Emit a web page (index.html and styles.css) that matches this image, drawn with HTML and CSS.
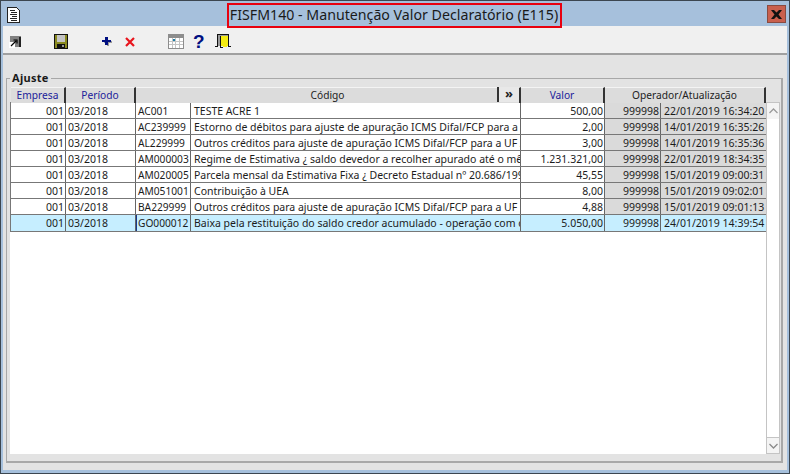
FILE: index.html
```html
<!DOCTYPE html>
<html lang="pt">
<head>
<meta charset="utf-8">
<title>FISFM140</title>
<link rel="stylesheet" href="styles.css">
</head>
<body>
<div class="window">
  <header class="titlebar">
    <svg class="app-icon" width="13" height="16" viewBox="0 0 13 16" shape-rendering="crispEdges">
      <path d="M.5.5h9l3 3v12H.5z" fill="#fff" stroke="#222"/>
      <path d="M3 3h5v1H3zM4 5h6v1H4zM3 7h7v1H3zM5 9h5v1H5zM3 11h7v1H3zM4 13h6v1H4z" fill="#222"/>
    </svg>
    <h1 class="title">FISFM140 - Manutenção Valor Declaratório (E115)</h1>
    <button class="close" aria-label="Fechar">
      <svg width="11" height="9" viewBox="0 0 11 9"><path d="M0 0h3l2.500 2.500L8 0h3L7.500 4.500 11 9H8L5.500 6.500 3 9H0l3.500-4.500z" fill="#111"/></svg>
    </button>
  </header>
  <nav class="toolbar">
    <svg class="tool t-jump" width="12" height="12" viewBox="0 0 12 12" shape-rendering="crispEdges">
      <path d="M1 0h11v11H1z" fill="#808080"/><path d="M10 1h2v10h-2z" fill="#222"/>
      <path d="M0 6h6v6H0z" fill="#fff"/><path d="M2 10l5-5M4.500 4h3.500v3.500" fill="none" stroke="#000" stroke-width="1.200" shape-rendering="auto"/>
    </svg>
    <svg class="tool t-save" width="14" height="15" viewBox="0 0 14 15" shape-rendering="crispEdges">
      <path d="M0 0h14v15H0z" fill="#111"/><path d="M1 1h12v13H1z" fill="#8a8a20"/><path d="M3 1h8v7H3z" fill="#c4c4c4"/><path d="M3 10h8v4H3z" fill="#111"/><path d="M8 11h2v2H8z" fill="#999"/>
    </svg>
    <svg class="tool t-add" width="10" height="9" viewBox="0 0 10 9" shape-rendering="crispEdges">
      <path d="M5 3h4v1h1v2H7v3H5V6H2V5h3z" fill="#9a9a9a"/><path d="M3 0h3v3h3v2H6v3H3V5H0V3h3z" fill="#000f80"/>
    </svg>
    <svg class="tool t-del" width="10" height="10" viewBox="0 0 10 10">
      <path d="M1 1l8 8M9 1l-8 8" stroke="#e8141c" stroke-width="2.200" fill="none"/>
    </svg>
    <svg class="tool t-cal" width="16" height="15" viewBox="0 0 16 15" shape-rendering="crispEdges">
      <path d="M0 0h16v15H0z" fill="#8d8d8d"/><path d="M1 4h14v10H1z" fill="#fff"/>
      <path d="M4 4h1v10H4zM7 4h1v10H7zM11 4h1v10h-1zM1 7h14v1H1zM1 10h14v1H1z" fill="#c4c4c4"/><path d="M5 5h2v2H5z" fill="#1b7fa8"/>
    </svg>
    <span class="tool t-help">?</span>
    <svg class="tool t-exit" width="16" height="15" viewBox="0 0 16 15" shape-rendering="crispEdges">
      <path d="M2 0h12v1H2zM2 1h1v12H2zM13 1h1v12h-1z" fill="#111"/>
      <path d="M0 12h3v1H0zM13 12h3v1h-3z" fill="#111"/>
      <path d="M3 1h10v1H3zM3 2h2v10H3z" fill="#9a9a9a"/>
      <path d="M5 2h1v12H5zM6 13h2v1H6z" fill="#111"/>
      <path d="M6 2h7v10h-1v1H8v-1H6z" fill="#f5ec12"/>
    </svg>
  </nav>
  <main class="content">
    <section class="group">
      <h2 class="legend">Ajuste</h2>
      <div class="grid-wrap">
        <div class="grid-main">
          <div class="row head">
            <div class="hcell blue">Empresa</div>
            <div class="hcell blue">Período</div>
            <div class="hcell span2">Código<span class="more">»</span></div>
            <div class="hcell blue">Valor</div>
            <div class="hcell span2b">Operador/Atualização</div>
          </div>
          <div class="rows">
            <div class="row"><div class="c r">001</div><div class="c">03/2018</div><div class="c">AC001</div><div class="c">TESTE ACRE 1</div><div class="c r">500,00</div><div class="c r g">999998</div><div class="c g">22/01/2019 16:34:20</div></div>
            <div class="row"><div class="c r">001</div><div class="c">03/2018</div><div class="c">AC239999</div><div class="c">Estorno de débitos para ajuste de apuração ICMS Difal/FCP para a UF de Acre</div><div class="c r">2,00</div><div class="c r g">999998</div><div class="c g">14/01/2019 16:35:26</div></div>
            <div class="row"><div class="c r">001</div><div class="c">03/2018</div><div class="c">AL229999</div><div class="c">Outros créditos para ajuste de apuração ICMS Difal/FCP para a UF Alagoas</div><div class="c r">3,00</div><div class="c r g">999998</div><div class="c g">14/01/2019 16:35:36</div></div>
            <div class="row"><div class="c r">001</div><div class="c">03/2018</div><div class="c">AM000003</div><div class="c">Regime de Estimativa ¿ saldo devedor a recolher apurado até o mês</div><div class="c r">1.231.321,00</div><div class="c r g">999998</div><div class="c g">22/01/2019 18:34:35</div></div>
            <div class="row"><div class="c r">001</div><div class="c">03/2018</div><div class="c">AM020005</div><div class="c">Parcela mensal da Estimativa Fixa ¿ Decreto Estadual nº 20.686/1999</div><div class="c r">45,55</div><div class="c r g">999998</div><div class="c g">15/01/2019 09:00:31</div></div>
            <div class="row"><div class="c r">001</div><div class="c">03/2018</div><div class="c">AM051001</div><div class="c">Contribuição à UEA</div><div class="c r">8,00</div><div class="c r g">999998</div><div class="c g">15/01/2019 09:02:01</div></div>
            <div class="row"><div class="c r">001</div><div class="c">03/2018</div><div class="c">BA229999</div><div class="c">Outros créditos para ajuste de apuração ICMS Difal/FCP para a UF Bahia</div><div class="c r">4,88</div><div class="c r g">999998</div><div class="c g">15/01/2019 09:01:13</div></div>
            <div class="row sel"><div class="c r">001</div><div class="c">03/2018</div><div class="c focus">GO000012</div><div class="c">Baixa pela restituição do saldo credor acumulado - operação com diferimento</div><div class="c r">5.050,00</div><div class="c r">999998</div><div class="c">24/01/2019 14:39:54</div></div>
          </div>
        </div>
        <div class="scrollbar">
          <div class="sbtn"><svg width="9" height="6" viewBox="0 0 9 6"><path d="M.5 5l4-4 4 4" fill="none" stroke="#9a9a9a" stroke-width="1.300"/></svg></div>
          <div class="sbtn"><svg width="9" height="6" viewBox="0 0 9 6"><path d="M.5 1l4 4 4-4" fill="none" stroke="#8a8a8a" stroke-width="1.300"/></svg></div>
        </div>
      </div>
    </section>
  </main>
</div>
</body>
</html>
```
FILE: styles.css
```css
* { box-sizing: border-box; }
html, body { margin: 0; padding: 0; }
body { width: 790px; height: 474px; overflow: hidden; font-family: "Noto Sans", sans-serif; }
.window { width: 790px; height: 474px; display: flex; flex-direction: column; background: #a6c0dc; border: 1px solid #3c4650; padding: 0 2px 3px 2px; }
.titlebar { height: 25px; margin: 0 -2px; display: flex; align-items: flex-start; position: relative; justify-content: center; flex: none; }
.app-icon { position: absolute; left: 6px; top: 6px; }
.title { margin: 2px 0 0 -2px; height: 25px; padding: 0; border: 2px solid #e8000f; font: 400 14.2px/20px "Noto Sans", sans-serif; color: #1a1a1a; white-space: nowrap; width: 335px; text-align: center; position: relative; z-index: 1; }
.close { position: absolute; right: 3px; top: 4px; width: 19px; height: 18px; padding: 0; background: #c9604e; border: 1px solid #8a4a40; display: flex; align-items: center; justify-content: center; }
.toolbar { height: 29px; flex: none; background: #f0f0f0; border-bottom: 2px solid #a0a0a0; display: flex; align-items: center; padding: 4px 0 0 6px; }
.tool { flex: none; }
.t-save { margin-left: 33px; }
.t-add { margin-left: 34px; }
.t-del { margin-left: 13px; }
.t-cal { margin-left: 33px; }
.t-help { margin-left: 9px; font: 700 19px/17px "Liberation Sans", sans-serif; color: #000f80; width: 11px; text-align: center; }
.t-exit { margin-left: 11px; }
.content { flex: 1; background: #e3e3e3; padding: 23px 4px 7px 3px; min-height: 0; }
.group { height: 100%; border: 1px solid #a8a8a8; border-right-width: 2px; border-bottom-width: 2px; position: relative; padding: 8px 0 0 3px; }
.legend { position: absolute; left: 3px; top: -8px; margin: 0; padding: 0 2px; background: #e3e3e3; font: 700 11px/14px "Noto Sans", sans-serif; letter-spacing: .3px; color: #1a1a1a; }
.grid-wrap { display: flex; height: 367px; }
.grid-main { width: 756px; display: flex; flex-direction: column; background: #fff; }
.row { display: grid; grid-template-columns: 56px 70px 55px 330px 84px 56px 105px; height: 16px; }
.row.head { height: 15px; background: #e3e3e3; grid-template-columns: 56px 70px 385px 84px 161px; flex: none; }
.hcell { font-size: 10.200px; line-height: 15px; text-align: center; color: #222; background: #dcdcdc; border-right: 2px solid #333; border-top: 1px solid #f4f4f4; white-space: nowrap; position: relative; }
.hcell.blue { color: #20209a; }
.hcell:first-child { margin-left: 1px; }
.more { position: absolute; right: 0; top: -1px; width: 22px; height: 15px; border-left: 2px solid #333; background: #e8e8e8; font-weight: 700; font-size: 13px; line-height: 13px; }
.rows { flex: 1; }
.rows .row { border-bottom: 1px solid #777; }
.rows .row:first-child { border-top: 1px solid #777; height: 17px; }
.rows .row.sel { height: 17px; }
.c { font-size: 10.500px; line-height: 17px; padding: 0 1px 0 2px; color: #1c1c1c; border-right: 1px solid #666; overflow: hidden; white-space: nowrap; }
.c:first-child { border-left: 1px solid #777; }
.c:last-child { border-right: 0; padding-left: 3px; }
.c.r { text-align: right; }
.c.g { background: #dadada; }
.c:nth-child(3) { padding-left: 2px; font-size: 10.200px; }
.c:nth-child(4) { padding-left: 3px; }
.sel { background: #c6eeff; }
.focus { box-shadow: inset 1px 0 0 #1a3a8a; }
.scrollbar { width: 14px; margin-top: 15px; background: #fff; border: 1px solid #c4c4c4; display: flex; flex-direction: column; justify-content: space-between; }
.sbtn { height: 16px; display: flex; align-items: center; justify-content: center; background: #f4f4f4; }
.sbtn:last-child { border-top: 1px solid #c4c4c4; }
```
